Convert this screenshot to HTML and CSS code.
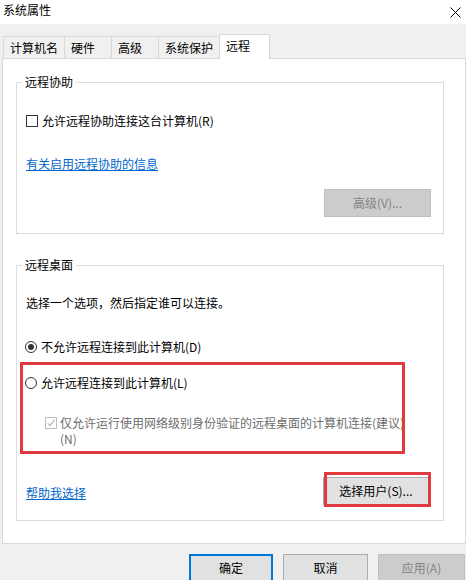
FILE: index.html
```html
<!DOCTYPE html>
<html lang="zh-CN">
<head>
<meta charset="utf-8">
<title>系统属性</title>
<link rel="stylesheet" href="styles.css">
</head>
<body>
<div class="window">
  <div class="titlebar">
    <span class="title">系统属性</span>
    <svg class="close" width="11" height="11" viewBox="0 0 11 11"><path d="M0.5 0.5 L10.5 10.5 M10.5 0.5 L0.5 10.5" stroke="#000" stroke-width="1" fill="none"/></svg>
  </div>
  <div class="tabs">
    <div class="tab">计算机名</div>
    <div class="tab">硬件</div>
    <div class="tab">高级</div>
    <div class="tab">系统保护</div>
    <div class="tab tab-active">远程</div>
  </div>
  <div class="panel">
    <fieldset class="group group-assist">
      <legend>远程协助</legend>
      <div class="option">
        <span class="checkbox"></span>
        <span>允许远程协助连接这台计算机(R)</span>
      </div>
      <a class="link link-info">有关启用远程协助的信息</a>
      <div class="btn-row">
        <span class="btn btn-disabled btn-adv">高级(V)...</span>
      </div>
    </fieldset>
    <fieldset class="group group-desktop">
      <legend>远程桌面</legend>
      <div class="hint">选择一个选项，然后指定谁可以连接。</div>
      <div class="option opt-deny">
        <span class="radio radio-on"></span>
        <span>不允许远程连接到此计算机(D)</span>
      </div>
      <div class="option opt-allow">
        <span class="radio"></span>
        <span>允许远程连接到此计算机(L)</span>
      </div>
      <div class="nla">
        <span class="checkbox checkbox-disabled">
          <svg width="10" height="10" viewBox="0 0 10 10"><path d="M1.5 5 L4 7.5 L8.5 2" stroke="#bcbcbc" stroke-width="1.2" fill="none"/></svg>
        </span>
        <span class="nla-text">仅允许运行使用网络级别身份验证的远程桌面的计算机连接(建议)<br>(N)</span>
      </div>
      <div class="bottom-row">
        <a class="link">帮助我选择</a>
        <span class="btn btn-users">选择用户(S)...</span>
      </div>
    </fieldset>
  </div>
  <div class="actions">
    <span class="btn btn-ok">确定</span>
    <span class="btn btn-cancel">取消</span>
    <span class="btn btn-disabled btn-apply">应用(A)</span>
  </div>
  <div class="mark mark-allow"></div>
  <div class="mark mark-users"></div>
</div>
</body>
</html>
```

FILE: styles.css
```css
* { box-sizing: border-box; }
html, body { margin: 0; padding: 0; }
body {
  font-family: "Noto Sans CJK SC", "Noto Sans", sans-serif;
  font-size: 12px;
  line-height: 16px;
  color: #000;
  background: #f0f0f0;
}
.window {
  position: relative;
  width: 466px;
  height: 580px;
  overflow: hidden;
  background: #f0f0f0;
}
.titlebar {
  height: 24px;
  background: #fff;
  display: flex;
  justify-content: space-between;
  align-items: flex-start;
  padding: 2px 4px 0 3px;
}
.close { margin-top: 5px; margin-right: 1px; }

.tabs {
  display: flex;
  align-items: flex-end;
  height: 24px;
  margin-top: 10px;
  padding-left: 3px;
  position: relative;
  z-index: 1;
}
.tab {
  height: 22px;
  min-width: 48px;
  padding: 0 6px;
  line-height: 21px;
  border: 1px solid #d9d9d9;
  border-bottom: none;
  margin-right: -1px;
  background: #f0f0f0;
}
.tab-active {
  height: 25px;
  min-width: 51px;
  margin-bottom: -1px;
  background: #fff;
  line-height: 21px;
  padding-bottom: 3px;
}

.panel {
  margin-left: 2px;
  width: 464px;
  height: 486px;
  border: 1px solid #d9d9d9;
  background: #fff;
  padding: 0 21px 0 13px;
}
.group {
  margin: 0;
  border: 1px solid #dcdcdc;
  padding: 0 12px 16px 9px;
  min-width: 0;
}
.group legend {
  padding: 0 3px;
  margin-left: -4px;
  line-height: 16px;
}
.group-assist { margin-top: 15px; padding-top: 23px; }
.group-desktop { margin-top: 23px; padding-top: 22px; padding-bottom: 15px; }

.option {
  display: flex;
  align-items: center;
  gap: 4px;
  height: 16px;
}
.checkbox {
  width: 12px;
  height: 12px;
  border: 1px solid #333;
  background: #fff;
  display: inline-flex;
  align-items: center;
  justify-content: center;
  flex: none;
}
.checkbox-disabled { border-color: #bcbcbc; }
.radio {
  width: 12px;
  height: 12px;
  border: 1px solid #333;
  border-radius: 50%;
  flex: none;
  margin-left: -1px;
  position: relative;
  background: #fff;
}
.radio-on::after {
  content: "";
  position: absolute;
  left: 2px; top: 2px;
  width: 6px; height: 6px;
  border-radius: 50%;
  background: #333;
}
.link {
  color: #0066cc;
  text-decoration: underline;
  display: inline-block;
}
.link-info { margin-top: 27px; }
.btn-row {
  display: flex;
  justify-content: flex-end;
  margin-top: 17px;
}
.btn {
  display: inline-flex;
  align-items: center;
  justify-content: center;
  height: 28px;
  background: #e1e1e1;
  border: 1px solid #adadad;
  color: #000;
}
.btn-disabled {
  background: #cccccc;
  border-color: #bfbfbf;
  color: #838383;
}
.btn-adv { width: 107px; }

.hint { height: 16px; }
.opt-deny { margin-top: 28px; }
.opt-allow { margin-top: 20px; }
.nla {
  display: flex;
  align-items: flex-start;
  gap: 3px;
  margin-top: 24px;
  margin-left: 19px;
  color: #6d6d6d;
  line-height: 16px;
}
.nla .checkbox { margin-top: 2px; }
.nla-text { white-space: nowrap; }
.bottom-row {
  display: flex;
  justify-content: space-between;
  align-items: center;
  margin-top: 30px;
}
.bottom-row .link { margin-top: 3px; }
.btn-users { width: 106px; margin-right: 2px; }

.actions {
  display: flex;
  justify-content: flex-end;
  gap: 10px;
  margin-top: 10px;
  padding-right: 1px;
}
.btn-ok { width: 84px; border: 2px solid #0078d7; }
.btn-cancel { width: 85px; }
.btn-apply { width: 87px; }

.mark {
  position: absolute;
  border: 3px solid #e23b3f;
  pointer-events: none;
}
.mark-allow { left: 20px; top: 362px; width: 385px; height: 92px; }
.mark-users { left: 324px; top: 472px; width: 107px; height: 35px; }
```
